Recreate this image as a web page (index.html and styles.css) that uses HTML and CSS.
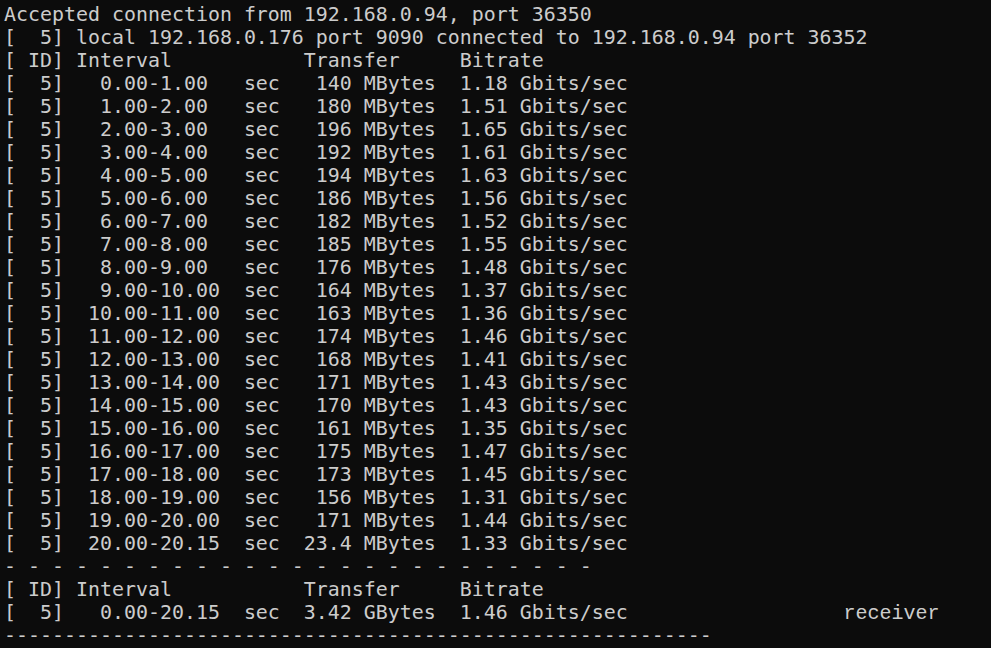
FILE: index.html
```html
<!DOCTYPE html>
<html>
<head>
<meta charset="utf-8">
<link rel="stylesheet" href="styles.css">
</head>
<body>
<pre class="term">Accepted connection from 192.168.0.94, port 36350
[  5] local 192.168.0.176 port 9090 connected to 192.168.0.94 port 36352
[ ID] Interval           Transfer     Bitrate
[  5]   0.00-1.00   sec   140 MBytes  1.18 Gbits/sec
[  5]   1.00-2.00   sec   180 MBytes  1.51 Gbits/sec
[  5]   2.00-3.00   sec   196 MBytes  1.65 Gbits/sec
[  5]   3.00-4.00   sec   192 MBytes  1.61 Gbits/sec
[  5]   4.00-5.00   sec   194 MBytes  1.63 Gbits/sec
[  5]   5.00-6.00   sec   186 MBytes  1.56 Gbits/sec
[  5]   6.00-7.00   sec   182 MBytes  1.52 Gbits/sec
[  5]   7.00-8.00   sec   185 MBytes  1.55 Gbits/sec
[  5]   8.00-9.00   sec   176 MBytes  1.48 Gbits/sec
[  5]   9.00-10.00  sec   164 MBytes  1.37 Gbits/sec
[  5]  10.00-11.00  sec   163 MBytes  1.36 Gbits/sec
[  5]  11.00-12.00  sec   174 MBytes  1.46 Gbits/sec
[  5]  12.00-13.00  sec   168 MBytes  1.41 Gbits/sec
[  5]  13.00-14.00  sec   171 MBytes  1.43 Gbits/sec
[  5]  14.00-15.00  sec   170 MBytes  1.43 Gbits/sec
[  5]  15.00-16.00  sec   161 MBytes  1.35 Gbits/sec
[  5]  16.00-17.00  sec   175 MBytes  1.47 Gbits/sec
[  5]  17.00-18.00  sec   173 MBytes  1.45 Gbits/sec
[  5]  18.00-19.00  sec   156 MBytes  1.31 Gbits/sec
[  5]  19.00-20.00  sec   171 MBytes  1.44 Gbits/sec
[  5]  20.00-20.15  sec  23.4 MBytes  1.33 Gbits/sec
- - - - - - - - - - - - - - - - - - - - - - - - -
[ ID] Interval           Transfer     Bitrate
[  5]   0.00-20.15  sec  3.42 GBytes  1.46 Gbits/sec                  <span class="alt">receiver</span>
-----------------------------------------------------------</pre>
</body>
</html>
```
FILE: styles.css
```css
html, body {
  margin: 0;
  padding: 0;
  background: #0c0c0c;
  height: 100%;
  overflow: hidden;
}
.term {
  margin: 0;
  padding: 3px 4px 0 4px;
  color: #cccccc;
  font-family: "DejaVu Sans Mono", monospace;
  font-size: 19.93px;
  line-height: 23px;
  white-space: pre;
}
.alt {
  font-family: "Liberation Mono", monospace;
  font-size: 20px;
  line-height: 1;
}
```
